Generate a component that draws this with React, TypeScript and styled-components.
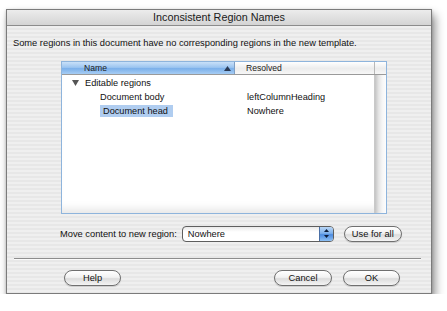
import React from 'react';
import styled, { createGlobalStyle } from 'styled-components';

const GlobalStyle = createGlobalStyle`
  html, body {
    margin: 0;
    padding: 0;
    background: #ffffff;
  }
  body {
    font-family: "Liberation Sans", Arial, sans-serif;
    color: #111;
  }
`;

const rows = [
  { name: 'Editable regions', resolved: '', indent: 23, group: true, selected: false },
  { name: 'Document body', resolved: 'leftColumnHeading', indent: 38, group: false, selected: false },
  { name: 'Document head', resolved: 'Nowhere', indent: 38, group: false, selected: true },
];

export default function App() {
  return (
    <>
      <GlobalStyle />
      <Window>
        <TitleBar>Inconsistent Region Names</TitleBar>
        <Content>
          <Message>
            Some regions in this document have no corresponding regions in the new template.
          </Message>

          <TableFrame>
            <HeaderRow>
              <NameHeader>
                <span>Name</span>
                <svg width="7" height="5" viewBox="0 0 7 5">
                  <path d="M3.5 0 L7 5 L0 5 Z" fill="#2a3a55" />
                </svg>
              </NameHeader>
              <ResolvedHeader>Resolved</ResolvedHeader>
              <ScrollHeader />
            </HeaderRow>
            <TableBody>
              <List>
                {rows.map((r) => (
                  <Row key={r.name}>
                    <NameCell $indent={r.indent}>
                      {r.group && (
                        <Disclosure width="7" height="6" viewBox="0 0 7 6">
                          <path d="M0 0 L7 0 L3.5 6 Z" fill="#555" />
                        </Disclosure>
                      )}
                      <NameText $selected={r.selected}>{r.name}</NameText>
                    </NameCell>
                    <ResolvedCell>{r.resolved}</ResolvedCell>
                  </Row>
                ))}
              </List>
              <ScrollTrack />
            </TableBody>
          </TableFrame>

          <MoveRow>
            <Label>Move content to new region:</Label>
            <Popup>
              <PopupValue>Nowhere</PopupValue>
              <Stepper>
                <svg width="5" height="9" viewBox="0 0 5 9">
                  <path d="M2.5 0 L5 3 L0 3 Z" fill="#0d1d3a" />
                  <path d="M0 6 L5 6 L2.5 9 Z" fill="#0d1d3a" />
                </svg>
              </Stepper>
            </Popup>
            <PillButton $width={58}>Use for all</PillButton>
          </MoveRow>

          <Separator />

          <ButtonRow>
            <PillButton $width={57}>Help</PillButton>
            <RightGroup>
              <PillButton $width={58}>Cancel</PillButton>
              <PillButton $width={57}>OK</PillButton>
            </RightGroup>
          </ButtonRow>
        </Content>
      </Window>
    </>
  );
}

const Window = styled.div`
  margin: 9px 0 0 6px;
  width: 426px;
  height: 285px;
  box-sizing: border-box;
  border: 1px solid #7b7b7b;
  display: flex;
  flex-direction: column;
  background: repeating-linear-gradient(
    to bottom,
    #efefef 0px,
    #efefef 2px,
    #e7e7e7 2px,
    #e7e7e7 4px
  );
  box-shadow: 3px 6px 9px rgba(0, 0, 0, 0.45), 0 1px 3px rgba(0, 0, 0, 0.2);
`;

const TitleBar = styled.div`
  height: 15px;
  flex-shrink: 0;
  border-bottom: 1px solid #8c8c8c;
  background: linear-gradient(to bottom, #ececec, #d4d4d4);
  font-size: 10.8px;
  line-height: 15px;
  text-align: center;
  color: #1a1a1a;
`;

const Content = styled.div`
  display: flex;
  flex-direction: column;
  padding: 11px 0 0 6px;
`;

const Message = styled.div`
  font-size: 9.3px;
  line-height: 12px;
  color: #111;
`;

const TableFrame = styled.div`
  margin: 12px 0 0 48px;
  width: 326px;
  height: 153px;
  box-sizing: border-box;
  border: 1px solid #8eb4dc;
  background: #fff;
  display: flex;
  flex-direction: column;
`;

const HeaderRow = styled.div`
  display: flex;
  height: 13px;
  box-sizing: border-box;
  border-bottom: 1px solid #9a9a9a;
  font-size: 8.6px;
  line-height: 12px;
  color: #1c1c1c;
`;

const NameHeader = styled.div`
  width: 173px;
  box-sizing: border-box;
  border-right: 1px solid #7f9fc4;
  padding: 0 3px 0 22px;
  display: flex;
  align-items: center;
  justify-content: space-between;
  background: linear-gradient(to bottom, #c9e0f8 0%, #9cc5f0 45%, #7cb0ea 55%, #a6cdf4 100%);
`;

const ResolvedHeader = styled.div`
  flex: 1;
  box-sizing: border-box;
  border-right: 1px solid #b8b8b8;
  padding-left: 11px;
  background: linear-gradient(to bottom, #ffffff, #ececec 55%, #f7f7f7);
`;

const ScrollHeader = styled.div`
  width: 11px;
  background: linear-gradient(to bottom, #ffffff, #ececec 55%, #f7f7f7);
`;

const TableBody = styled.div`
  flex: 1;
  display: flex;
  box-shadow: inset 0 -10px 8px -6px rgba(0, 0, 0, 0.1);
`;

const List = styled.div`
  flex: 1;
  padding-top: 1px;
`;

const Row = styled.div`
  display: flex;
  height: 14px;
  align-items: center;
  font-size: 9.2px;
  color: #111;
`;

const NameCell = styled.div<{ $indent: number }>`
  position: relative;
  width: 174px;
  box-sizing: border-box;
  padding-left: ${({ $indent }) => $indent}px;
  height: 100%;
  display: flex;
  align-items: center;
`;

const Disclosure = styled.svg`
  position: absolute;
  left: 10px;
  top: 4px;
`;

const NameText = styled.span<{ $selected: boolean }>`
  height: 12px;
  line-height: 12px;
  padding: ${({ $selected }) => ($selected ? '0 5px 0 3px' : '0')};
  background: ${({ $selected }) => ($selected ? '#b0cdf0' : 'transparent')};
`;

const ResolvedCell = styled.div`
  flex: 1;
  padding-left: 11px;
`;

const ScrollTrack = styled.div`
  width: 11px;
  border-left: 1px solid #c9c9c9;
  background: linear-gradient(to right, #c4c4c4, #e6e6e6 35%, #f7f7f7 70%, #fdfdfd);
`;

const MoveRow = styled.div`
  margin: 11px 0 0 47px;
  display: flex;
  align-items: center;
  height: 17px;
`;

const Label = styled.span`
  font-size: 9.3px;
  color: #111;
`;

const Popup = styled.div`
  margin-left: 5px;
  width: 152px;
  height: 16px;
  box-sizing: border-box;
  border: 1px solid #5e5e5e;
  border-radius: 4px;
  background: linear-gradient(to bottom, #e9e9e9, #ffffff 35%, #ffffff);
  display: flex;
  align-items: stretch;
  overflow: hidden;
`;

const PopupValue = styled.span`
  flex: 1;
  padding-left: 5px;
  font-size: 9.3px;
  line-height: 14px;
  color: #111;
`;

const Stepper = styled.div`
  width: 13px;
  border-left: 1px solid #4a6fa5;
  display: flex;
  align-items: center;
  justify-content: center;
  background: linear-gradient(to bottom, #b9d6f6 0%, #7eb1ec 45%, #4d8be0 55%, #8dc0f4 100%);
`;

const PillButton = styled.div<{ $width: number }>`
  width: ${({ $width }) => $width}px;
  height: 16px;
  box-sizing: border-box;
  border: 1px solid #6f6f6f;
  border-radius: 8px;
  background: linear-gradient(to bottom, #ffffff 0%, #f2f2f2 45%, #dcdcdc 55%, #f4f4f4 100%);
  box-shadow: 0 1px 1px rgba(0, 0, 0, 0.15);
  font-size: 9.3px;
  line-height: 14px;
  text-align: center;
  color: #111;
  flex-shrink: 0;

  ${MoveRow} & {
    margin-left: 10px;
  }
`;

const Separator = styled.div`
  margin: 16px 0 0 1px;
  width: 407px;
  height: 1px;
  background: #8d8d8d;
  border-bottom: 1px solid #fafafa;
`;

const ButtonRow = styled.div`
  margin: 9px 0 0 51px;
  display: flex;
  align-items: center;
  height: 17px;
`;

const RightGroup = styled.div`
  margin-left: auto;
  margin-right: 31px;
  display: flex;
  gap: 11px;
`;
